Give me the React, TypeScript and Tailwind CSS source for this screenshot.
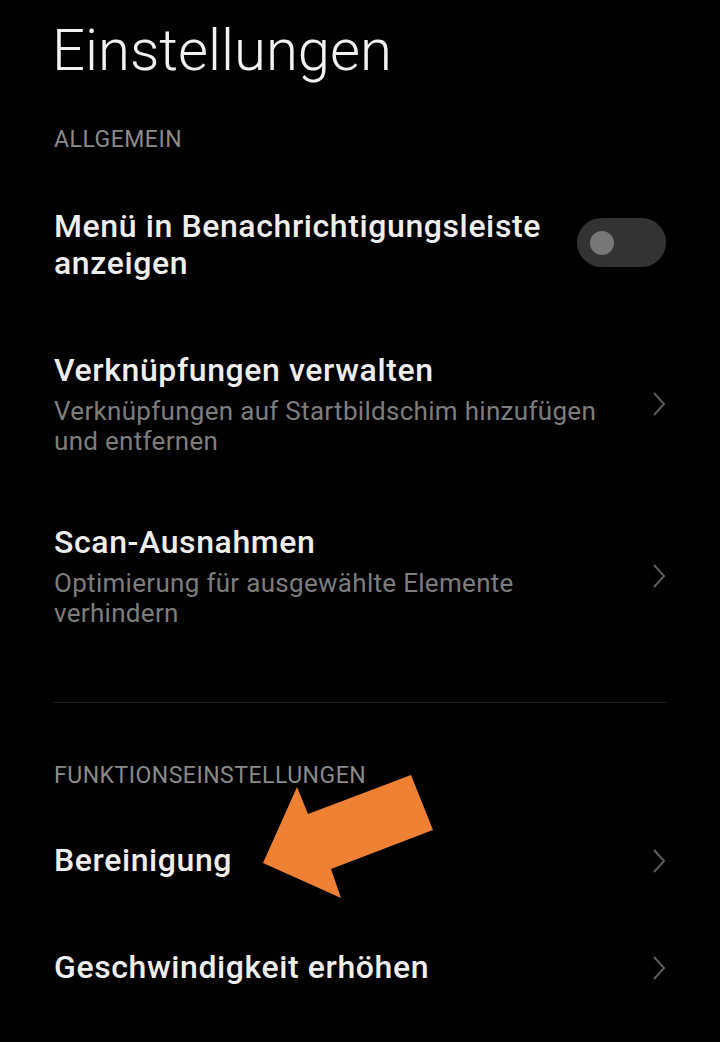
import React from 'react';

function Chevron() {
  return (
    <svg width="14" height="26" viewBox="0 0 14 26" className="shrink-0">
      <polyline points="2,2 12,13 2,24" fill="none" stroke="#5c5c5c" strokeWidth="2" />
    </svg>
  );
}

function Toggle() {
  return (
    <div className="w-[89px] h-[49px] rounded-full bg-[#333333] flex items-center pl-[13px] shrink-0 self-start mt-[10px]">
      <div className="w-[24px] h-[24px] rounded-full bg-[#777777]" />
    </div>
  );
}

function SectionHeader({ label, className }: { label: string; className: string }) {
  return (
    <div className={`text-[23px] leading-[28px] tracking-[0.5px] text-[#8a8a8a] ${className}`}>{label}</div>
  );
}

function NavItem({ title, subtitle, className }: { title: string; subtitle?: string; className: string }) {
  return (
    <div className={`flex items-center justify-between ${className}`}>
      <div className="flex flex-col w-[560px]">
        <div className="text-[32px] leading-[37px] tracking-[0.6px] font-medium text-[#eeeeee]">{title}</div>
        {subtitle && (
          <div className="text-[26px] leading-[30px] tracking-[0.3px] text-[#7d7d7d] mt-[7px]">{subtitle}</div>
        )}
      </div>
      <Chevron />
    </div>
  );
}

export default function App() {
  return (
    <div className="relative w-[720px] h-[1042px] bg-black overflow-hidden font-['Roboto','Liberation_Sans',sans-serif]">
      <div className="flex flex-col px-[54px] pt-[16px]">
        <h1 className="text-[58px] leading-[68px] font-light text-[#f2f2f2] -ml-[2px]">Einstellungen</h1>

        <SectionHeader label="ALLGEMEIN" className="mt-[42px]" />

        <div className="flex justify-between mt-[54px]">
          <div className="text-[32px] leading-[37px] tracking-[0.6px] font-medium text-[#eeeeee] w-[500px]">
            Menü in Benachrichtigungsleiste anzeigen
          </div>
          <Toggle />
        </div>

        <NavItem
          className="mt-[70px]"
          title="Verknüpfungen verwalten"
          subtitle="Verknüpfungen auf Startbildschim hinzufügen und entfernen"
        />

        <NavItem
          className="mt-[68px]"
          title="Scan-Ausnahmen"
          subtitle="Optimierung für ausgewählte Elemente verhindern"
        />

        <div className="h-px bg-[#232323] mt-[74px]" />

        <SectionHeader label="FUNKTIONSEINSTELLUNGEN" className="mt-[59px]" />

        <NavItem className="mt-[52px]" title="Bereinigung" />
        <NavItem className="mt-[70px]" title="Geschwindigkeit erhöhen" />
      </div>

      {/* annotation arrow */}
      <svg className="absolute left-0 top-0 pointer-events-none" width="720" height="1042">
        <polygon
          points="263,863 297,787 308,814 411,775 433,830 331,869 341,898"
          fill="#ee8133"
        />
      </svg>
    </div>
  );
}
